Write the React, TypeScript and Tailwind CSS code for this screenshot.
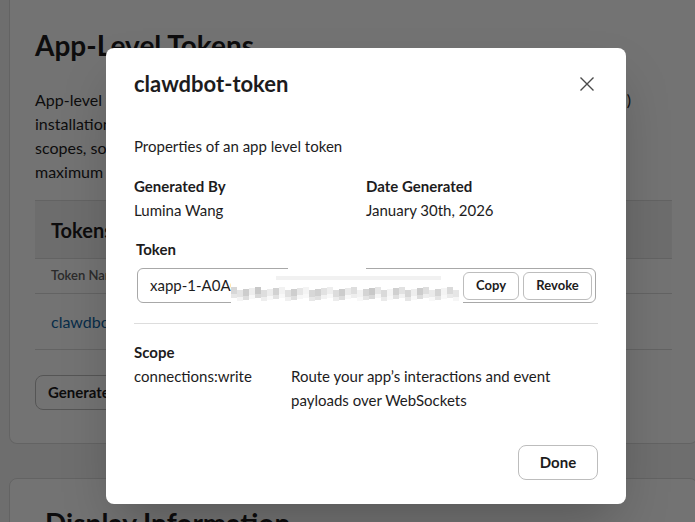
// Token details modal over the app settings page (dimmed behind an overlay).
const cells: number[] = [
  215, 228, 205, 238, 200, 222, 236, 210, 242, 224, 206, 230, 244, 215, 208, 226, 238, 220, 204, 234,
  222, 242, 212, 200, 230, 218, 244, 208, 226, 214, 238, 204, 222, 234, 212, 244, 218, 230,
];

function Pixelated() {
  return (
    <svg width="232" height="34" viewBox="0 0 232 34" className="block">
      <rect x="0" y="0" width="232" height="34" fill="#ffffff" />
      <rect x="45" y="4" width="165" height="4" fill="#f1f1f1" />
      {cells.map((v, i) => {
        const w = 6;
        const x = i * w;
        const top = 15 + ((i * 7) % 4);
        const h = 7 + ((i * 3) % 3);
        const c = `rgb(${v},${v},${v})`;
        const l = Math.min(v + 16, 248);
        const c2 = `rgb(${l},${l},${l})`;
        return (
          <g key={i}>
            <rect x={x} y={top} width={w} height={h} fill={c} />
            <rect x={x} y={top + h} width={w} height={4} fill={c2} />
          </g>
        );
      })}
    </svg>
  );
}

function Background() {
  return (
    <div className="min-h-[522px] bg-[#f4f4f4] pb-10">
      <div className="ml-[9px] w-[689px] rounded-b-lg border-x border-b border-[#dcdcdc] bg-white px-[25px] pt-[27px] pb-[33px]">
        <h1 className="text-[28px] leading-[36px] font-bold text-[#1d1c1d]">App-Level Tokens</h1>
        <p className="mt-[25px] text-[16px] leading-[24px] text-[#1d1c1d]">
          <span className="block whitespace-nowrap">App-level tokens allow your app to use platform features that apply to multiple (or all)</span>
          <span className="block whitespace-nowrap">installations of your app, such as Socket Mode. Each token can be</span>
          <span className="block whitespace-nowrap">scopes, so you can control exactly what each token is able to do. You can generate a</span>
          <span className="block whitespace-nowrap">maximum of 10 app-level tokens.</span>
        </p>
        <div className="mt-4 border-t border-[#dcdcdc]">
          <div className="flex h-[57px] items-center bg-[#f2f2f2] px-4 text-[20px] font-bold text-[#1d1c1d]">Tokens</div>
          <div className="flex h-[35px] items-center border-t border-[#dcdcdc] px-4 text-[13px] font-semibold text-[#616061]">
            Token Name
          </div>
          <div className="flex h-[57px] items-center border-y border-[#dcdcdc] px-4 text-[16px] text-[#1264a3]">
            clawdbot-token
          </div>
        </div>
        <button className="mt-[25px] h-[35px] rounded-lg border border-[#bdbdbd] px-3 text-[15px] font-bold text-[#1d1c1d]">
          Generate Token and Scopes
        </button>
      </div>
      <div className="mt-[34px] ml-[9px] w-[689px] rounded-lg border border-[#dcdcdc] bg-white pl-[35px] pt-[26px]">
        <h2 className="text-[28px] leading-[36px] font-bold text-[#1d1c1d]">Display Information</h2>
      </div>
    </div>
  );
}

export default function App() {
  return (
    <div className="relative h-[522px] w-[695px] overflow-hidden font-['Lato','Liberation_Sans',sans-serif]">
      <Background />
      <div className="absolute inset-0 bg-black/55" />

      <div className="absolute top-[48px] left-[106px] w-[520px] rounded-lg bg-white px-[28px] pt-[20px] pb-[24px] text-[#1d1c1d] shadow-2xl">
        <div className="flex items-center justify-between">
          <h2 className="text-[22px] leading-[32px] font-bold">clawdbot-token</h2>
          <svg width="16" height="16" viewBox="0 0 16 16" className="mr-[3px]">
            <path d="M1.5 1.5 L14.5 14.5 M14.5 1.5 L1.5 14.5" stroke="#4a4a4a" strokeWidth="1.4" fill="none" />
          </svg>
        </div>

        <p className="mt-[34px] text-[15px] leading-[24px]">Properties of an app level token</p>

        <div className="mt-4 grid grid-cols-2 text-[15px] leading-[24px]">
          <div>
            <div className="font-bold">Generated By</div>
            <div>Lumina Wang</div>
          </div>
          <div>
            <div className="font-bold">Date Generated</div>
            <div>January 30th, 2026</div>
          </div>
        </div>

        <div className="mt-4 pl-[2px] text-[15px] leading-[22px] font-bold">Token</div>
        <div className="relative mt-2 ml-[3px] mr-[2px] flex h-[35px] items-center rounded-md border border-[#a8a8a8] pl-3 text-[15px]">
          <span className="whitespace-nowrap">xapp-1-A0AC9QX7K2P-10412938475613-5e3f4a</span>
          <div className="absolute top-[3px] left-[93px]">
            <Pixelated />
          </div>
          <div className="absolute -top-[2px] left-[150px] h-[6px] w-[78px] bg-white" />
          <div className="absolute top-[3px] right-[3px] flex items-center gap-1 bg-white">
            <button className="h-[28px] w-[56px] rounded-md border border-[#bdbdbd] bg-white text-[13px] font-bold">Copy</button>
            <button className="h-[28px] w-[69px] rounded-md border border-[#bdbdbd] bg-white text-[13px] font-bold">Revoke</button>
          </div>
        </div>

        <div className="mt-[20px] border-t border-[#dddddd]" />

        <div className="mt-4 text-[15px] leading-[24px] font-bold">Scope</div>
        <div className="flex text-[15px] leading-[24px]">
          <div className="w-[157px] shrink-0">connections:write</div>
          <div className="pr-[20px]">Route your app’s interactions and event payloads over WebSockets</div>
        </div>

        <div className="mt-[33px] flex justify-end">
          <button className="h-[35px] w-[80px] rounded-lg border border-[#bdbdbd] text-[15px] font-bold">Done</button>
        </div>
      </div>
    </div>
  );
}
